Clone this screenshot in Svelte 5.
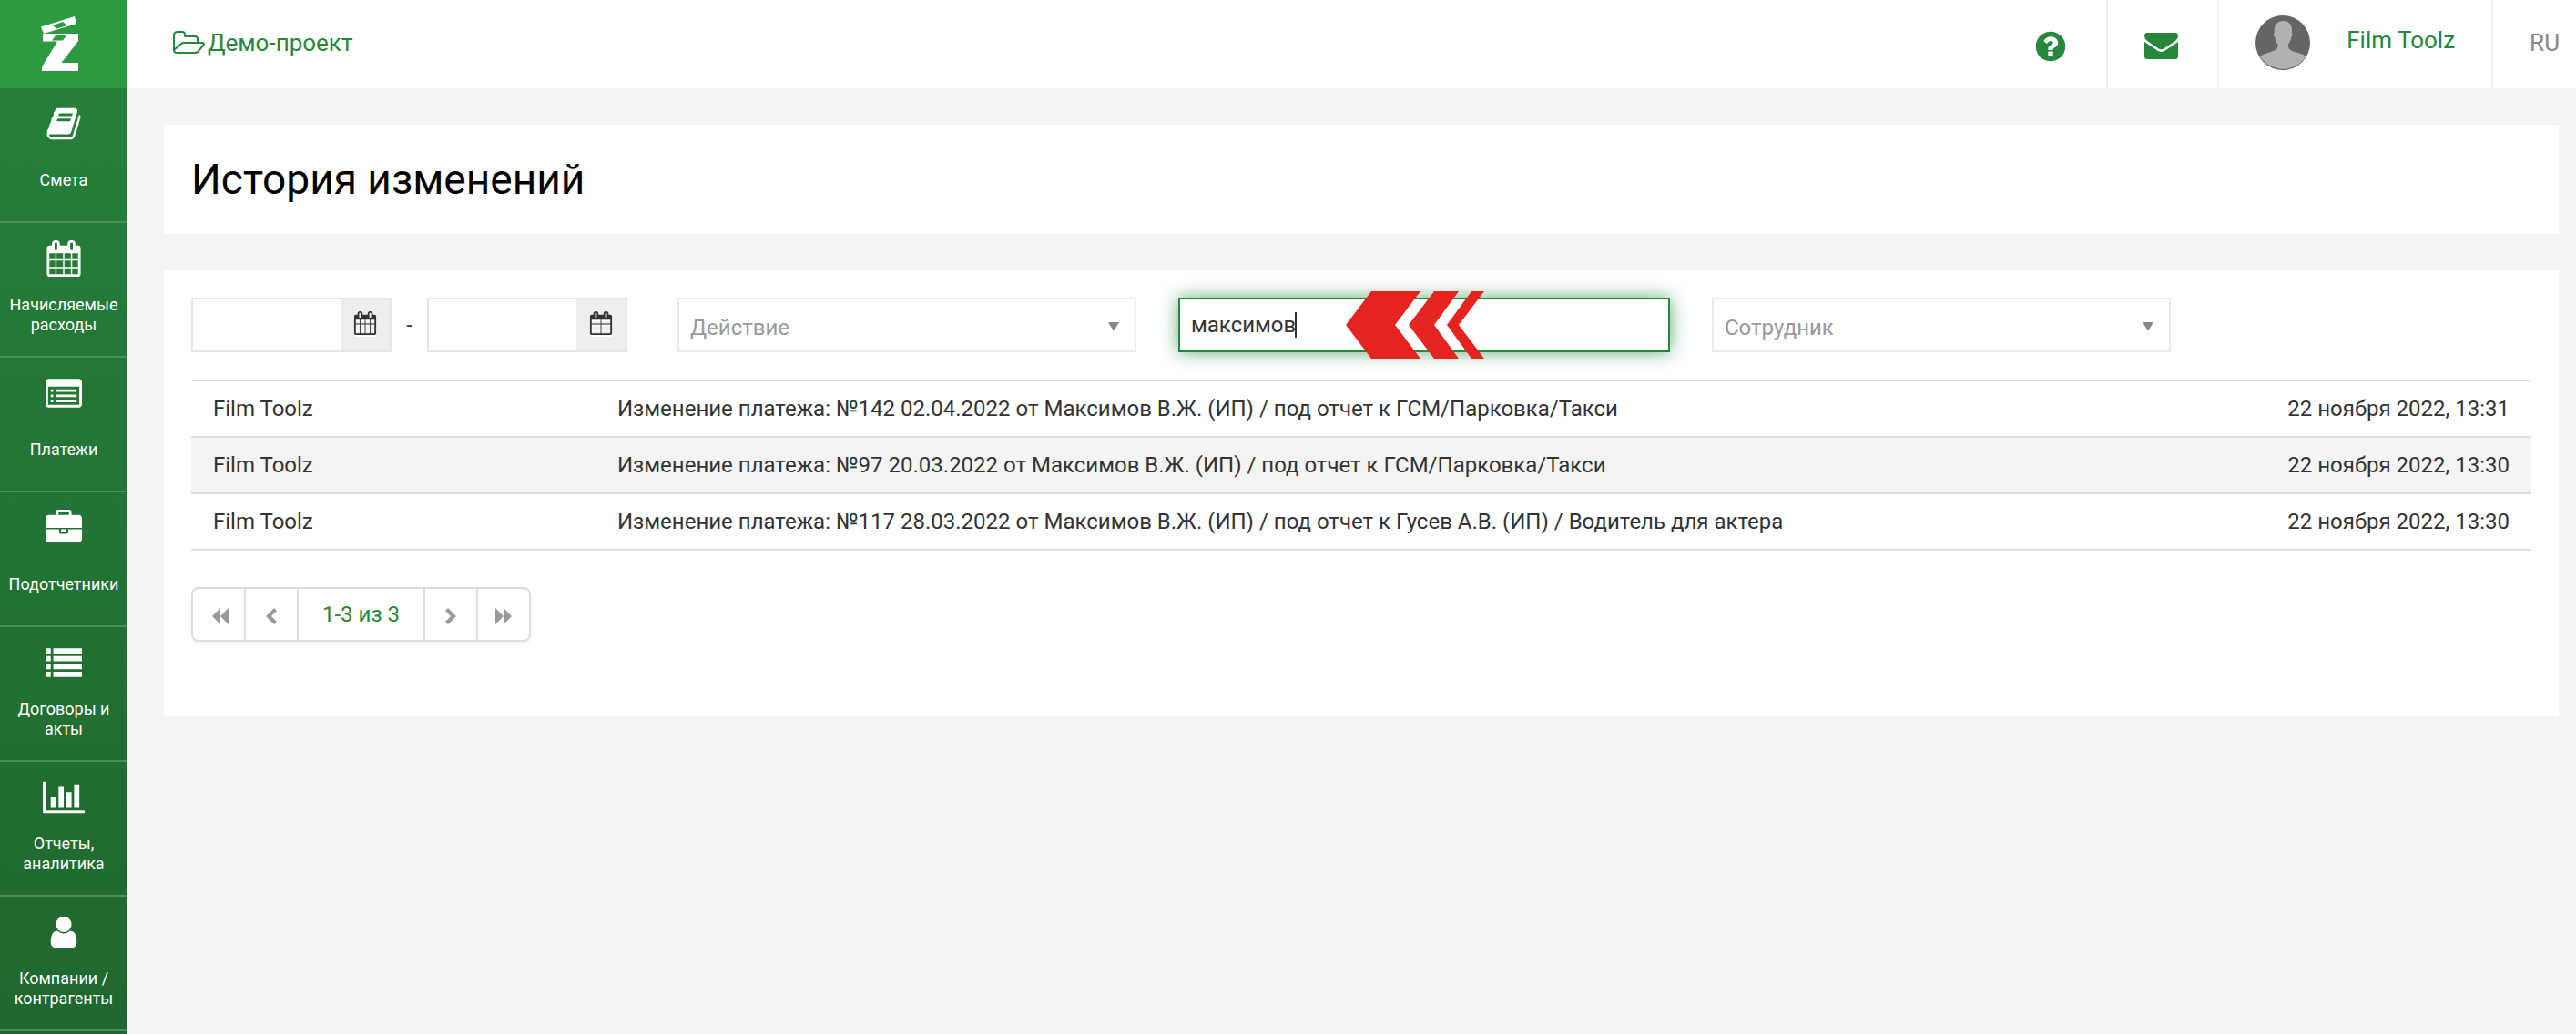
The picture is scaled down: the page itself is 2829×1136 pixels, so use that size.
<script>
  // Date range and filters
  let dateFrom = '';
  let dateTo = '';
  let action = '';
  let search = 'максимов';
  let employee = '';

  const menu = [
    { icon: 'book', title: 'Смета' },
    { icon: 'calendar', title: 'Начисляемые расходы' },
    { icon: 'list-alt', title: 'Платежи' },
    { icon: 'briefcase', title: 'Подотчетники' },
    { icon: 'list', title: 'Договоры и акты' },
    { icon: 'chart', title: 'Отчеты, аналитика' },
    { icon: 'user', title: 'Компании / контрагенты' }
  ];

  const history = [
    {
      user: 'Film Toolz',
      text: 'Изменение платежа: №142 02.04.2022 от Максимов В.Ж. (ИП) / под отчет к ГСМ/Парковка/Такси',
      date: '22 ноября 2022, 13:31'
    },
    {
      user: 'Film Toolz',
      text: 'Изменение платежа: №97 20.03.2022 от Максимов В.Ж. (ИП) / под отчет к ГСМ/Парковка/Такси',
      date: '22 ноября 2022, 13:30'
    },
    {
      user: 'Film Toolz',
      text: 'Изменение платежа: №117 28.03.2022 от Максимов В.Ж. (ИП) / под отчет к Гусев А.В. (ИП) / Водитель для актера',
      date: '22 ноября 2022, 13:30'
    }
  ];

  // Icons on a 1792 grid
  const icons = {
    book: 'M1703 478q40 57 18 129l-275 906q-19 64-76.500 107.500t-122.500 43.500h-923q-77 0-148.500-53.500t-99.500-131.500q-24-67-2-127 0-4 3-27t4-37q1-8-3-21.500t-3-19.500q2-11 8-21t16.500-23.500 16.500-23.500q23-38 45-91.500t30-91.500q3-10 .5-30t-.5-28q3-11 17-28t17-23q21-36 42-92t25-90q1-9-2.500-32t.5-28q4-13 22-30.500t22-22.500q19-26 42.500-84.500t27.500-96.500q1-8-3-25.500t-2-26.500q2-8 9-18t18-23 17-21q8-12 16.500-30.500t15-35 16-36 19.500-32 26.500-23.500 36-11.500 47.500 5.500l-1 3q38-9 51-9h761q74 0 114 56t18 130l-274 906q-36 119-71.500 153.500t-128.500 34.500h-869q-27 0-38 15-11 16-1 43 24 70 144 70h923q29 0 56-15.500t35-41.500l300-987q7-22 5-57 38 15 59 43zm-1064 2q-4 13 2 22.500t20 9.500h608q13 0 25.500-9.500t16.500-22.500l21-64q4-13-2-22.500t-20-9.500h-608q-13 0-25.500 9.500t-16.500 22.500zm-83 256q-4 13 2 22.500t20 9.500h608q13 0 25.500-9.500t16.500-22.500l21-64q4-13-2-22.500t-20-9.500h-608q-13 0-25.500 9.500t-16.500 22.500z',
    calendar: 'M192 1664h288v-288h-288v288zm352 0h320v-288h-320v288zm-352-352h288v-320h-288v320zm352 0h320v-320h-320v320zm-352-384h288v-288h-288v288zm736 736h320v-288h-320v288zm-384-736h320v-288h-320v288zm768 736h288v-288h-288v288zm-384-352h320v-320h-320v320zm-352-864v-288q0-13-9.500-22.500t-22.500-9.500h-64q-13 0-22.500 9.500t-9.500 22.500v288q0 13 9.500 22.500t22.500 9.500h64q13 0 22.500-9.500t9.500-22.500zm736 864h288v-320h-288v320zm-384-384h320v-288h-320v288zm384 0h288v-288h-288v288zm32-480v-288q0-13-9.500-22.500t-22.500-9.500h-64q-13 0-22.500 9.500t-9.500 22.500v288q0 13 9.500 22.500t22.500 9.500h64q13 0 22.500-9.500t9.500-22.500zm384-64v1280q0 52-38 90t-90 38h-1408q-52 0-90-38t-38-90v-1280q0-52 38-90t90-38h128v-96q0-66 47-113t113-47h64q66 0 113 47t47 113v96h384v-96q0-66 47-113t113-47h64q66 0 113 47t47 113v96h128q52 0 90 38t38 90z',
    'list-alt': 'M160 192h1472q66 0 113 47t47 113v1088q0 66-47 113t-113 47h-1472q-66 0-113-47t-47-113v-1088q0-66 47-113t113-47zM128 608v832q0 32 32 32h1472q32 0 32-32v-832q0-32-32-32h-1472q-32 0-32 32zM256 704h128v128h-128zM256 960h128v128h-128zM256 1216h128v128h-128zM512 704h1024v128h-1024zM512 960h1024v128h-1024zM512 1216h1024v128h-1024z',
    briefcase: 'M640 256h512v-128h-512v128zM1792 896v-480q0-66-47-113t-113-47h-352v-160q0-40-28-68t-68-28h-576q-40 0-68 28t-28 68v160h-352q-66 0-113 47t-47 113v480zM1024 960v128h-256v-128zM1792 960v480q0 66-47 113t-113 47h-1472q-66 0-113-47t-47-113v-480h672v160q0 26 19 45t45 19h320q26 0 45-19t19-45v-160z',
    list: 'M32 192h224v256h-256v-224q0-32 32-32zM0 576h256v256h-256zM0 960h256v256h-256zM0 1344h256v256h-256zM384 192h1408v256h-1408zM384 576h1408v256h-1408zM384 960h1408v256h-1408zM384 1344h1408v256h-1408z',
    chart: 'M-128 128h128v1408h1920v128h-2048zM256 896h256v512h-256zM640 384h256v1024h-256zM1024 640h256v768h-256zM1408 256h256v1152h-256z',
    user: 'M1536 1399q0 109-62.500 187t-150.500 78h-854q-88 0-150.500-78t-62.500-187q0-85 8.500-160.500t31.500-152 58.500-131 94-89 134.500-34.500q131 128 313 128t313-128q76 0 134.500 34.500t94 89 58.500 131 31.500 152 8.500 160.500zm-256-887q0 159-112.500 271.500t-271.500 112.500-271.500-112.500-112.500-271.500 112.500-271.500 271.500-112.500 271.500 112.500 112.500 271.500z',
    question: 'M1024 1376v-192q0-14-9-23t-23-9h-192q-14 0-23 9t-9 23v192q0 14 9 23t23 9h192q14 0 23-9t9-23zm256-672q0-88-55.500-163t-138.500-116-170-41q-243 0-371 213-15 24 8 42l132 100q7 6 19 6 16 0 25-12 53-68 86-92 34-24 86-24 48 0 85.500 26t37.500 59q0 38-20 61t-68 45q-63 28-115.500 86.500t-52.500 125.500v36q0 14 9 23t23 9h192q14 0 23-9t9-23q0-19 21.500-49.500t54.500-49.500q32-18 49-28.500t46-35 44.500-48 28-60.500 12.500-81zm384 192q0 209-103 385.500t-279.500 279.500-385.500 103-385.500-103-279.500-279.500-103-385.500 103-385.500 279.500-279.500 385.500-103 385.500 103 279.500 279.500 103 385.500z'
  };
</script>

<div class="layout">
  <aside class="sidebar">
    <a class="logo" href="#home" aria-label="Film Toolz">
      <svg width="42" height="60" viewBox="0 0 42 60">
        <path d="M0 11.500 37 0l2 8L3 19z" fill="#fff" />
        <path d="M13 10l11-4 5 4-12 3.500z" fill="#2d9a41" />
        <path d="M2 19h39v8L22.500 51H41v9H1v-4.500l17-28H2z" fill="#fff" />
        <path d="M16 21h12l-4 5.500H12z" fill="#2d9a41" />
      </svg>
    </a>
    <nav>
      {#each menu as item}
        <a class="menu-item" href="#menu">
          <svg class="menu-icon" viewBox="0 0 1792 1792">
            <path d={icons[item.icon]} fill-rule="evenodd" />
          </svg>
          <span class="menu-title">{item.title}</span>
        </a>
      {/each}
    </nav>
  </aside>

  <div class="page">
    <header class="topbar">
      <a class="project" href="#project">
        <svg width="36" height="26" viewBox="0 0 36 26">
          <path
            d="M1 21V5q0-4 4-4h5q3 0 3 3v2h11q3 0 3 3v4M1 21 9 14q1-1 3-1h20q3 0 1.500 2.500L28 22q-1 2-4 2H5q-4 0-4-3z"
            fill="none"
            stroke="#27873b"
            stroke-width="2"
            stroke-linejoin="round"
          />
        </svg>
        <span>Демо-проект</span>
      </a>
      <a class="top-link" href="#help" aria-label="Помощь">
        <svg class="question" viewBox="0 0 1792 1792"><path d={icons.question} /></svg>
      </a>
      <a class="top-link bordered" href="#messages" aria-label="Сообщения">
        <svg width="37" height="29" viewBox="0 0 37 29">
          <path d="M3 0h31q3 0 3 3.500 0 3-2.500 5L22 17q-3.500 2.500-7 0L2.500 8.500Q0 6.500 0 3.500 0 0 3 0z" />
          <path d="M0 10l15 10q3.500 2 7 0l15-10v16q0 3-3 3H3q-3 0-3-3z" />
        </svg>
      </a>
      <a class="profile bordered" href="#profile">
        <svg class="avatar" width="60" height="60" viewBox="0 0 60 60">
          <circle cx="30" cy="30" r="30" fill="#646567" />
          <path
            d="M30.500 6c6 0 9.500 4 9.500 10 0 1 0 2-.2 3 1.200.6.900 4-.6 5.500-.7 3-2 5.500-3.200 7v3c1 3 3 4 7 5.500 5 1.500 10 2.500 12.500 5A30 30 0 0 1 5 45c3-2.500 7.500-3.500 12-5 4-1.500 7-3 7.500-5.500v-3c-1.500-1.500-2.500-4-3-7-1.500-1.500-2-5-.8-5.500V16c0-6 4-10 9.800-10z"
            fill="#b0b1b3"
          />
        </svg>
        <span class="profile-name">Film Toolz</span>
      </a>
      <button type="button" class="lang bordered">RU</button>
    </header>

    <main>
      <section class="card heading">
        <h1>История изменений</h1>
      </section>

      <section class="card content">
        <form class="filters" on:submit|preventDefault>
          <div class="dates">
            <div class="date-group">
              <input type="text" aria-label="Дата с" bind:value={dateFrom} />
              <button type="button" aria-label="Выбрать дату начала">
                <svg viewBox="0 0 1792 1792"><path d={icons.calendar} fill-rule="evenodd" /></svg>
              </button>
            </div>
            <span class="dash">-</span>
            <div class="date-group">
              <input type="text" aria-label="Дата по" bind:value={dateTo} />
              <button type="button" aria-label="Выбрать дату окончания">
                <svg viewBox="0 0 1792 1792"><path d={icons.calendar} fill-rule="evenodd" /></svg>
              </button>
            </div>
          </div>

          <div class="select">
            <select aria-label="Действие" bind:value={action}>
              <option value="">Действие</option>
            </select>
          </div>

          <div class="search">
            <input type="text" aria-label="Поиск" bind:value={search} />
            <span class="caret"></span>
            <svg class="pointer" width="152" height="74" viewBox="0 0 152 74">
              <path d="M0 37 28 0h54L54 37l28 37H28z" />
              <path d="M69 37 97 0h27L97 37l27 37H97z" />
              <path d="M111 37 138 0h14l-28 37 28 37h-14z" />
            </svg>
          </div>

          <div class="select">
            <select aria-label="Сотрудник" bind:value={employee}>
              <option value="">Сотрудник</option>
            </select>
          </div>
        </form>

        <table>
          <tbody>
            {#each history as row}
              <tr>
                <td class="user">{row.user}</td>
                <td>{row.text}</td>
                <td class="date">{row.date}</td>
              </tr>
            {/each}
          </tbody>
        </table>

        <div class="pagination">
          <button type="button" aria-label="Первая страница">
            <svg width="18" height="18" viewBox="0 0 18 18"><path d="M9 0v18L0 9zM18 0v18L9 9z" /></svg>
          </button>
          <button type="button" aria-label="Предыдущая страница">
            <svg width="12" height="18" viewBox="0 0 12 18"><path d="M9 0l3 3-6 6 6 6-3 3-9-9z" /></svg>
          </button>
          <span class="pages">1-3 из 3</span>
          <button type="button" aria-label="Следующая страница">
            <svg width="12" height="18" viewBox="0 0 12 18"><path d="M3 0 0 3l6 6-6 6 3 3 9-9z" /></svg>
          </button>
          <button type="button" aria-label="Последняя страница">
            <svg width="18" height="18" viewBox="0 0 18 18"><path d="M0 0v18l9-9zM9 0v18l9-9z" /></svg>
          </button>
        </div>
      </section>
    </main>
  </div>
</div>

<style>
  :global(body) {
    background: #f4f4f4;
    font-family: Roboto, sans-serif;
    font-size: 24px;
    color: #333;
  }

  .layout,
  .layout * {
    box-sizing: border-box;
  }

  .layout {
    display: flex;
    min-height: 100vh;
  }

  a {
    color: #27873b;
    text-decoration: none;
  }

  input,
  select,
  button {
    font: inherit;
    color: inherit;
    outline: none;
    border-radius: 0;
  }

  .sidebar {
    flex: 0 0 140px;
    background: linear-gradient(#26813a, #1f672e);
  }

  .logo {
    display: flex;
    justify-content: center;
    align-items: center;
    height: 97px;
    padding: 0 8px 2px 0;
    background: #2d9a41;
  }

  .menu-item {
    display: flex;
    flex-direction: column;
    align-items: center;
    height: 148px;
    padding: 19px 4px 14px;
    border-bottom: 2px solid #4b8e58;
    color: #fff;
    font-size: 18px;
    line-height: 22px;
    text-align: center;
  }

  .menu-icon {
    flex: none;
    width: 40px;
    height: 40px;
    fill: #fff;
    overflow: visible;
  }

  .menu-title {
    display: flex;
    flex: 1;
    align-items: center;
    padding-top: 10px;
  }

  .page {
    flex: 1;
    min-width: 0;
  }

  .topbar {
    display: flex;
    height: 97px;
    background: #fff;
    font-size: 26px;
  }

  .project {
    display: flex;
    flex: 1;
    align-items: center;
    gap: 2px;
    padding-left: 50px;
    padding-bottom: 4px;
  }

  .bordered {
    border-left: 2px solid #f0f0f0;
  }

  .top-link {
    display: flex;
    justify-content: center;
    align-items: center;
    width: 122px;
    padding-top: 4px;
    fill: #27873b;
  }

  .top-link.bordered {
    padding-right: 4px;
  }

  .question {
    width: 38px;
    height: 38px;
  }

  .profile {
    display: flex;
    align-items: center;
    gap: 40px;
    padding: 0 40px;
    padding-bottom: 4px;
  }

  .profile-name {
    padding-bottom: 6px;
  }

  .lang {
    padding: 0 18px 4px 40px;
    border-width: 0 0 0 2px;
    background: none;
    color: #888;
  }

  main {
    display: flex;
    flex-direction: column;
    gap: 40px;
    padding: 40px 19px 40px 40px;
  }

  .card {
    padding: 30px;
    background: #fff;
  }

  h1 {
    margin: 0;
    color: #000;
    font-size: 46px;
    font-weight: 400;
    line-height: 60px;
  }

  .content {
    padding-bottom: 82px;
  }

  .filters {
    display: grid;
    grid-template-columns: 488px 504fr 540fr 504fr 350fr;
    gap: 46px;
    margin-bottom: 30px;
  }

  .dates {
    display: flex;
    align-items: center;
  }

  .date-group {
    display: flex;
    width: 220px;
    height: 60px;
    border: 2px solid #e5e6eb;
  }

  .date-group input {
    flex: 1;
    min-width: 0;
    padding: 0 14px;
    border: none;
  }

  .date-group button {
    display: flex;
    justify-content: center;
    align-items: center;
    width: 54px;
    padding: 0 0 4px;
    border: none;
    background: #eee;
  }

  .date-group svg {
    width: 26px;
    height: 26px;
    fill: #333;
    filter: drop-shadow(0 2px 0 #fff);
  }

  .dash {
    width: 39px;
    text-align: center;
  }

  .select {
    position: relative;
  }

  .select::after {
    content: '';
    position: absolute;
    top: 27px;
    right: 19px;
    border: 6px solid transparent;
    border-top: 10px solid #888;
    border-bottom: none;
    pointer-events: none;
  }

  select {
    appearance: none;
    width: 100%;
    height: 60px;
    padding: 6px 40px 0 12px;
    border: 2px solid #eaeaef;
    background: #fff;
    color: #999;
  }

  .search {
    position: relative;
  }

  .search input {
    width: 100%;
    height: 60px;
    padding: 0 12px;
    border: 2px solid #27873b;
    box-shadow: 0 0 20px rgba(39, 135, 59, 0.7);
    caret-color: transparent;
  }

  .caret {
    position: absolute;
    top: 16px;
    left: 128px;
    width: 2px;
    height: 28px;
    background: #333;
  }

  /* Red arrow over the search box */
  .pointer {
    position: absolute;
    top: -7px;
    left: 184px;
    fill: #e52421;
    pointer-events: none;
  }

  table {
    width: 100%;
    border-collapse: collapse;
  }

  tr {
    height: 62px;
    border-top: 2px solid #dedede;
    border-bottom: 2px solid #dedede;
  }

  tr:nth-child(even) {
    background: #f4f4f4;
  }

  td {
    padding: 0 24px;
  }

  .user {
    width: 444px;
  }

  .date {
    text-align: right;
    white-space: nowrap;
  }

  .pagination {
    display: inline-flex;
    height: 60px;
    margin-top: 40px;
    border: 2px solid #ddd;
    border-radius: 8px;
    box-shadow: 0 2px 4px rgba(0, 0, 0, 0.05);
  }

  .pagination button {
    display: flex;
    justify-content: center;
    align-items: center;
    width: 58px;
    padding: 4px 0 0;
    border: none;
    background: none;
  }

  .pagination button:first-child {
    width: 56px;
    padding-left: 4px;
  }

  .pagination button + button,
  .pages,
  .pages ~ button {
    border-left: 2px solid #ddd;
  }

  .pagination svg {
    fill: #999;
  }

  .pages {
    width: 139px;
    color: #27873b;
    line-height: 56px;
    text-align: center;
  }
</style>
